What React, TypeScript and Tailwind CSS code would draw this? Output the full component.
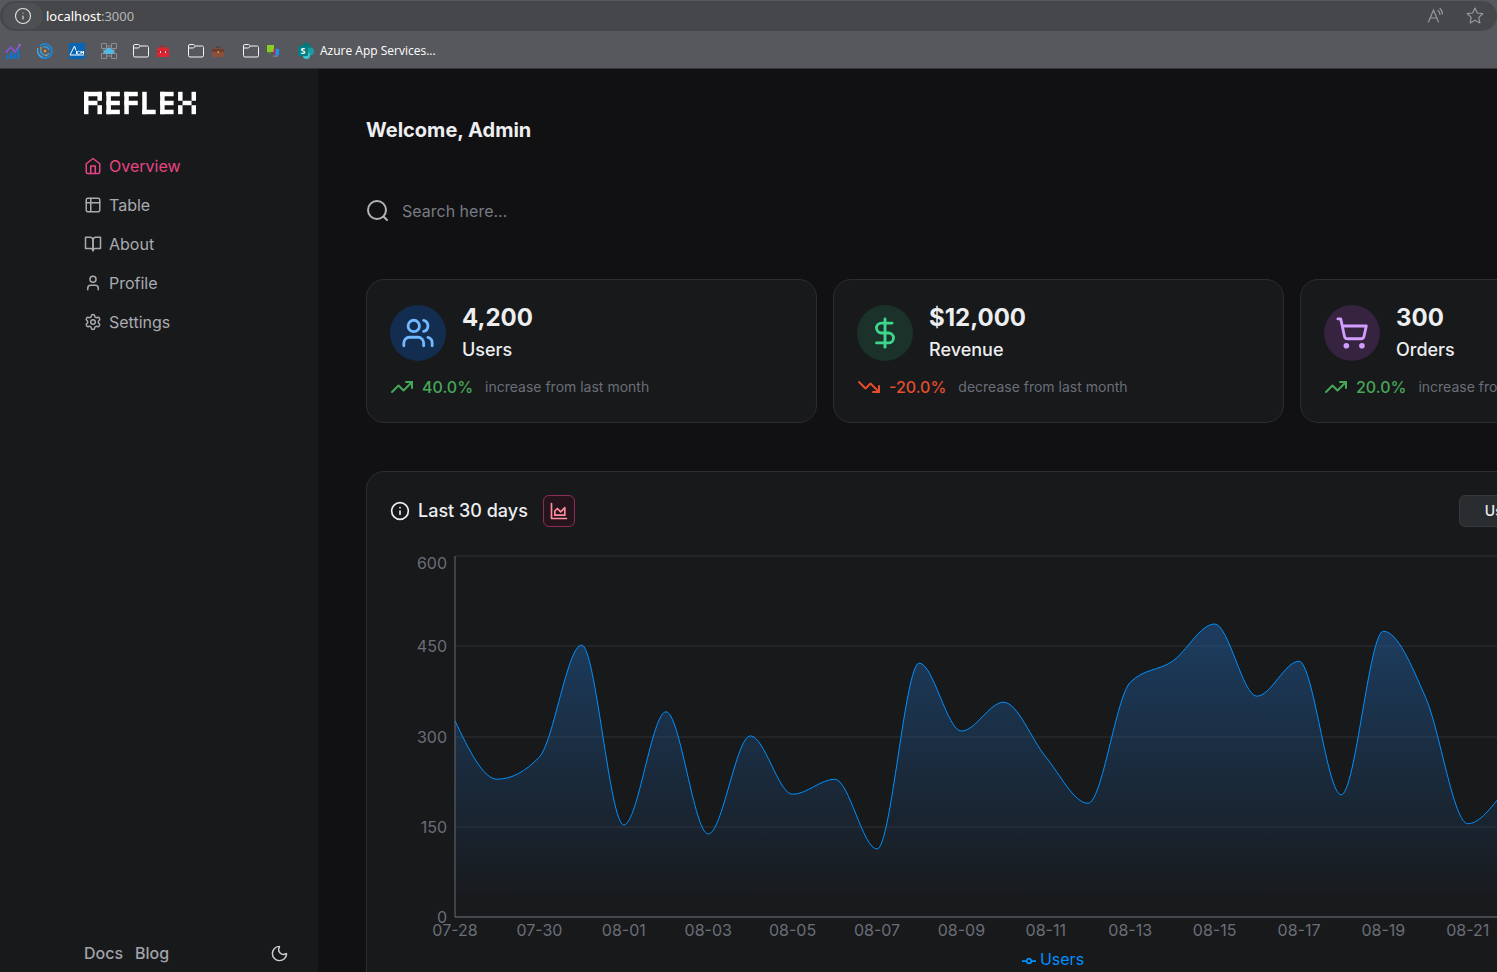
import type { ReactNode } from "react";
import { DollarSign, Info, Moon, Settings, ShoppingCart, TrendingDown, TrendingUp, User, Users } from "lucide-react";

function StrokeIcon({ size, children }: { size: number; children: ReactNode }) {
  return (
    <svg width={size} height={size} viewBox="0 0 24 24" fill="none" stroke="currentColor" strokeWidth="2" strokeLinecap="round" strokeLinejoin="round" aria-hidden="true">
      {children}
    </svg>
  );
}

const HomeIcon = () => (
  <StrokeIcon size={18}>
    <path d="m3 9 9-7 9 7v11a2 2 0 0 1-2 2H5a2 2 0 0 1-2-2z" />
    <path d="M9 22V12h6v10" />
  </StrokeIcon>
);

const TableIcon = () => (
  <StrokeIcon size={18}>
    <rect x="3" y="3" width="18" height="18" rx="2" />
    <path d="M3 9h18M9 3v18" />
  </StrokeIcon>
);

const BookIcon = () => (
  <StrokeIcon size={18}>
    <path d="M2 3h6a4 4 0 0 1 4 4v14a3 3 0 0 0-3-3H2z" />
    <path d="M22 3h-6a4 4 0 0 0-4 4v14a3 3 0 0 1 3-3h7z" />
  </StrokeIcon>
);

const AreaIcon = () => (
  <StrokeIcon size={20}>
    <path d="M3 3v18h18" />
    <path d="M7 12v5h12V8l-5 5-4-4Z" />
  </StrokeIcon>
);

const FolderIcon = () => (
  <svg width="16" height="16" viewBox="0 0 16 16" fill="none" stroke="#f3f3f4" aria-hidden="true">
    <path d="M.5 4V3A1.5 1.5 0 0 1 2 1.500h3.500l2 1.500h6A1.500 1.500 0 0 1 15.500 4.500V12.500a1.500 1.500 0 0 1-1.500 1.500H2a1.500 1.500 0 0 1-1.500-1.500zM.5 5h5l2-2" />
  </svg>
);

const LOGO_BLOCKS: [number, number, number, number][] = [
  [0, 0, 2, 10], [0, 0, 8, 2], [6, 0, 2, 4], [0, 4, 6, 2], [6, 6, 2, 4],
  [10, 0, 2, 10], [10, 0, 6, 2], [10, 4, 6, 2], [10, 8, 6, 2],
  [18, 0, 2, 10], [18, 0, 6, 2], [18, 4, 6, 2],
  [26, 0, 2, 10], [26, 8, 6, 2],
  [34, 0, 2, 10], [34, 0, 6, 2], [34, 4, 6, 2], [34, 8, 6, 2],
  [42, 0, 2, 4], [48, 0, 2, 4], [44, 4, 4, 2], [42, 6, 2, 4], [48, 6, 2, 4],
];

function Logo() {
  return (
    <svg width="112" height="24" viewBox="0 0 56 12" fill="white" role="img" aria-label="Reflex">
      {LOGO_BLOCKS.map(([x, y, w, h], i) => (
        <rect key={i} x={x * 1.12} y={0.4 + y * 1.12} width={w * 1.12} height={h * 1.12} />
      ))}
    </svg>
  );
}

function BrowserBar() {
  return (
    <header className="h-[69px] shrink-0 border-b border-[#37373a] bg-[#57585d] pt-px font-['Open_Sans',sans-serif]">
      <div className="flex h-[30px] items-center rounded-full bg-[#46474b] pr-3 pl-[3px]">
        <button aria-label="View site information" className="flex h-[26px] w-10 items-center justify-center rounded-full bg-[#4e4f53] text-[#e2e2e3]">
          <Info size={18} strokeWidth={1.5} />
        </button>
        <input aria-label="Address" className="sr-only" defaultValue="localhost:3000" />
        <span className="pl-[3px] font-['Noto_Sans',sans-serif] text-[13px] text-[#b4b5b7]">
          <span className="text-white">localhost</span>:3000
        </span>
        <div className="ml-auto flex items-center gap-5 text-[#97989b]">
          <button aria-label="Read aloud">
            <svg width="18" height="18" viewBox="0 0 18 18" fill="none" stroke="currentColor" strokeWidth="1.2" strokeLinecap="round">
              <path d="M1.500 15 6.500 3l5 12M3.300 11h6.400M11 3.500a6 6 0 0 1 2 4M13 1.500a9 9 0 0 1 2.500 5.500" />
            </svg>
          </button>
          <button aria-label="Add to favourites">
            <svg width="20" height="20" viewBox="0 0 20 20" fill="none" stroke="currentColor" strokeWidth="1.200" strokeLinejoin="round">
              <path d="m10 2 2.300 5 5.500.7-4 3.700 1 5.600-4.800-2.700L5.200 17l1-5.600-4-3.700 5.500-.7z" />
            </svg>
          </button>
        </div>
      </div>
      <nav aria-label="Bookmarks" className="flex h-[38px] items-center gap-4 pt-[2px] pl-[5px] text-[12px] text-white">
        <a href="#analytics" aria-label="Analytics">
          <svg width="16" height="16" viewBox="0 0 16 16">
            <path d="M1 12h3v4H1zM5 9h3v7H5zM9 11h2v5H9zM12 6h2.500v10H12z" fill="#1274c4" />
            <path d="m1 9 5-5 4 5 5-7" fill="none" stroke="#8b57d8" strokeWidth="1.500" />
            <circle cx="1.500" cy="9" r="1.300" fill="#7c4ddb" /><circle cx="6" cy="4.500" r="1.300" fill="#7c4ddb" /><circle cx="10" cy="8.500" r="1.300" fill="#7c4ddb" /><circle cx="14.500" cy="2" r="1.300" fill="#9b5fe8" />
          </svg>
        </a>
        <a href="#monitor" aria-label="Monitor">
          <svg width="16" height="16" viewBox="0 0 16 16" fill="none">
            <path d="M3 3a7 7 0 1 1-1.500 8" stroke="#1b83d2" strokeWidth="2" />
            <path d="M1 5a7 7 0 0 0 5 9.500" stroke="#47a6e0" strokeWidth="1.500" />
            <path d="M4 6a4.500 4.500 0 0 0 8 4M6 4a4.500 4.500 0 0 1 6 3" stroke="#35a0dc" strokeWidth="1.500" />
            <circle cx="8" cy="8" r="1.500" fill="#d98f3c" /><circle cx="4" cy="5" r="1" fill="#d98f3c" /><circle cx="9" cy="12.500" r="1" fill="#d98f3c" />
          </svg>
        </a>
        <a href="#law" aria-label="Acumen">
          <svg width="16" height="16" viewBox="0 0 16 16" fill="none">
            <rect width="16" height="16" fill="#0864b4" />
            <path d="M1 12 5.500 3 7 7.500M1 12h14M7.500 8v3M10.500 8.500a1.500 1.500 0 1 0 0 2.500M12 11V8l1 2 1.500-2v3" stroke="white" />
          </svg>
        </a>
        <a href="#cloud" aria-label="Cloud resources">
          <svg width="16" height="16" viewBox="0 0 16 16">
            <path d="M.5.5h5v5h-5zM10.500.5h5v5h-5zM.5 10.500h5v5h-5zM10.500 10.500h5v5h-5z" fill="none" stroke="#8c8d90" />
            <path d="M5.500 3h5M5.500 13h5M3 5.500v5M13 5.500v5" fill="none" stroke="#8c8d90" />
            <path d="M4.500 11a2 2 0 0 1 0-4A3.500 3.500 0 0 1 11 6.500a2.300 2.300 0 0 1 .5 4.500z" fill="#52b8e4" />
          </svg>
        </a>
        <a href="#toolbox" aria-label="Toolbox folder" className="flex items-center gap-2">
          <FolderIcon />
          <svg width="15" height="14" viewBox="0 0 15 14">
            <path d="M3.500 3.500V2h5v1.500" stroke="#a52a2d" fill="none" />
            <path d="M1 3.500h10l1 3V13H0V6.500z" fill="#dc2633" />
            <path d="M0 7.500h12" stroke="#b51f2b" /><path d="M3 7h1v2H3zM8 7h1v2H8z" fill="#ddd" />
          </svg>
        </a>
        <a href="#work" aria-label="Work folder" className="flex items-center gap-2">
          <FolderIcon />
          <svg width="15" height="14" viewBox="0 0 15 14">
            <path d="M4 4.500V3h4v1.500" stroke="#56352b" fill="none" />
            <rect y="4.500" width="12" height="8.500" rx="1" fill="#8a503c" />
            <path d="M0 5h12v3H0z" fill="#6d3d2e" /><path d="M5.500 7h1.500v2H5.500z" fill="#d59a3d" />
          </svg>
        </a>
        <a href="#screens" aria-label="Screens folder" className="flex items-center gap-2">
          <FolderIcon />
          <svg width="15" height="14" viewBox="0 0 15 14">
            <path d="M0 1h7v7H0z" fill="#87cf27" /><path d="M1 8h3v2H1z" fill="#50802a" />
            <path d="M6.500 5h2v5h-2z" fill="#d8175c" /><path d="M8.500 5h3.500v6.500H8.500z" fill="#1695e8" /><path d="M6 11.500h5V13H6z" fill="#7c7788" />
          </svg>
        </a>
        <a href="#azure" className="flex items-center gap-[5px]">
          <svg width="17" height="16" viewBox="0 0 17 16">
            <circle cx="8" cy="5" r="5" fill="#03787c" /><circle cx="12" cy="8.500" r="4" fill="#1a9ba1" /><circle cx="8.500" cy="12.500" r="3.500" fill="#37c6d0" />
            <rect y="3" width="10" height="10" rx="1" fill="#067d82" />
            <text x="5" y="11" textAnchor="middle" fontSize="9" fontWeight="700" fill="white">S</text>
          </svg>
          Azure App Services...
        </a>
      </nav>
    </header>
  );
}

const NAV = [
  { label: "Overview", icon: <HomeIcon />, active: true },
  { label: "Table", icon: <TableIcon /> },
  { label: "About", icon: <BookIcon /> },
  { label: "Profile", icon: <User size={18} /> },
  { label: "Settings", icon: <Settings size={18} /> },
];

function Sidebar() {
  return (
    <aside className="flex w-[318px] shrink-0 flex-col bg-[#18191b] pt-[22px] pr-[29px] pb-[7px] pl-[84px]">
      <Logo />
      <nav aria-label="Main" className="mt-[39px] flex flex-col gap-[15px]">
        {NAV.map((item) => (
          <a key={item.label} href={`#${item.label.toLowerCase()}`} className={item.active ? "flex items-center gap-[7px] text-[#e54583]" : "flex items-center gap-[7px] text-[#a9abb1]"}>
            {item.icon}
            {item.label}
          </a>
        ))}
      </nav>
      <div className="mt-auto flex items-center gap-3 font-medium text-[#a1a3a9]">
        <a href="#docs">Docs</a>
        <a href="#blog">Blog</a>
        <button aria-label="Toggle dark mode" className="ml-auto text-[#cfd0d3]">
          <Moon size={19} strokeWidth={1.8} />
        </button>
      </div>
    </aside>
  );
}

const STATS = [
  { value: "4,200", label: "Users", change: "40.0%", up: true, icon: <Users size={34} />, tint: "bg-[#132d50] text-[#70b8ff]" },
  { value: "$12,000", label: "Revenue", change: "-20.0%", up: false, icon: <DollarSign size={34} />, tint: "bg-[#1a3229] text-[#3dd68c]" },
  { value: "300", label: "Orders", change: "20.0%", up: true, icon: <ShoppingCart size={34} />, tint: "bg-[#352340] text-[#d19dff]" },
];

function StatCard({ stat }: { stat: (typeof STATS)[number] }) {
  return (
    <article className="rounded-[18px] border border-[#2b2d30] bg-[#18191b] px-[23px] pt-[21px] pb-[23px]">
      <div className="flex items-center gap-4">
        <div className={`flex size-14 items-center justify-center rounded-full ${stat.tint}`}>{stat.icon}</div>
        <div>
          <h2 className="text-[24px] leading-[34px] font-bold text-[#edeef0]">{stat.value}</h2>
          <p className="text-[18px] leading-[30px] font-medium text-[#edeef0]">{stat.label}</p>
        </div>
      </div>
      <div className="mt-[10px] flex items-center">
        <div className={stat.up ? "flex items-center gap-2 font-medium text-[#46a758]" : "flex items-center gap-2 font-medium text-[#e54d2e]"}>
          {stat.up ? <TrendingUp size={24} /> : <TrendingDown size={24} />}
          {stat.change}
        </div>
        <span className="ml-3 text-[14px] text-[#696e77]">{stat.up ? "increase" : "decrease"} from last month</span>
      </div>
    </article>
  );
}

const PLOT = { left: 64, top: 13, bottom: 374, right: 1330, step: 42.2 };
const DAILY_USERS = [
  326, 229, 266, 452, 153, 341, 138, 301, 204, 229, 113, 422, 309, 357, 266, 189, 390, 425, 487, 367, 425, 203, 475, 365, 155, 220, 310, 260, 380, 300, 340,
];
const TICK_DATES = ["07-28", "07-30", "08-01", "08-03", "08-05", "08-07", "08-09", "08-11", "08-13", "08-15", "08-17", "08-19", "08-21", "08-23", "08-25"];
const Y_TICKS = [600, 450, 300, 150, 0];

const toY = (value: number) => PLOT.bottom - (value * (PLOT.bottom - PLOT.top)) / 600;

/** Cubic path with monotone tangents through evenly spaced samples. */
function monotonePath(values: number[]) {
  const h = PLOT.step;
  const ys = values.map(toY);
  const slopes = ys.slice(1).map((y, i) => (y - ys[i]) / h);
  const tangents = ys.map((_, i) => {
    if (i === 0 || i === ys.length - 1) return 0;
    const a = slopes[i - 1];
    const b = slopes[i];
    if (a * b <= 0) return 0;
    return Math.sign(a) * 2 * Math.min(Math.abs(a), Math.abs(b), Math.abs(a + b) / 4);
  });
  const n = ys.length - 1;
  tangents[0] = (3 * slopes[0] - tangents[1]) / 2;
  tangents[n] = (3 * slopes[n - 1] - tangents[n - 1]) / 2;
  let d = `M${PLOT.left},${ys[0]}`;
  for (let i = 0; i < n; i++) {
    const x0 = PLOT.left + i * h;
    const x1 = x0 + h;
    d += `C${x0 + h / 3},${ys[i] + (tangents[i] * h) / 3} ${x1 - h / 3},${ys[i + 1] - (tangents[i + 1] * h) / 3} ${x1},${ys[i + 1]}`;
  }
  return d;
}

function UsersChart() {
  const line = monotonePath(DAILY_USERS);
  return (
    <svg width="1334" height="404" viewBox="0 0 1334 404" className="block overflow-visible" role="img" aria-label="Daily users over the last 30 days">
      <defs>
        <linearGradient id="usersFill" x1="0" y1="0" x2="0" y2="1">
          <stop offset="5%" stopColor="#205d9e" stopOpacity="0.5" />
          <stop offset="95%" stopColor="#205d9e" stopOpacity="0.01" />
        </linearGradient>
      </defs>
      {Y_TICKS.map((t) => (
        <line key={t} x1={PLOT.left} x2={PLOT.right} y1={Math.round(toY(t))} y2={Math.round(toY(t))} stroke="#2e3135" />
      ))}
      <path d={`${line}L${PLOT.left + PLOT.step * 30},${PLOT.bottom}L${PLOT.left},${PLOT.bottom}Z`} fill="url(#usersFill)" />
      <path d={line} fill="none" stroke="#0090ff" />
      <path d={`M${PLOT.left} ${PLOT.top}V${PLOT.bottom}H${PLOT.right}`} fill="none" stroke="#666a72" strokeWidth="1" />
      <g fill="#696e77" fontSize="16">
        {Y_TICKS.map((t) => (
          <text key={t} x={PLOT.left - 8} y={Math.max(toY(t), 20) + 6} textAnchor="end">{t}</text>
        ))}
        {TICK_DATES.map((date, i) => (
          <text key={date} x={PLOT.left + PLOT.step * 2 * i} y={PLOT.bottom + 19} textAnchor="middle">{date}</text>
        ))}
      </g>
    </svg>
  );
}

function ChartCard() {
  return (
    <section className="mt-12 rounded-[18px] border border-[#2b2d30] bg-[#18191b] px-[23px] pt-[23px] pb-6">
      <div className="flex h-8 items-center">
        <Info size={20} className="text-[#edeef0]" />
        <h2 className="ml-2 text-[18px] font-medium text-[#edeef0]">Last 30 days</h2>
        <button aria-label="Toggle area chart" className="ml-[15px] flex size-8 items-center justify-center rounded-[6px] border border-[#8a2d5a] bg-[#26141c] text-[#ff8da1]">
          <AreaIcon />
        </button>
        <div className="ml-auto flex w-[268px] rounded-[6px] border border-[#363a3f] bg-[#2a2d30] text-[14px] font-medium text-[#edeef0]">
          <button className="h-[30px] flex-1 text-center">Users</button>
          <button className="h-[30px] flex-1 bg-[#18191b] text-center">Revenue</button>
          <button className="h-[30px] flex-1 bg-[#18191b] text-center">Orders</button>
        </div>
      </div>
      <div className="mt-4 pl-px">
        <UsersChart />
      </div>
      <div className="flex items-center justify-center gap-1 pr-[11px] leading-6 text-[#0090ff]">
        <svg width="14" height="14" viewBox="0 0 32 32" fill="none" stroke="currentColor" strokeWidth="4" aria-hidden="true" className="mt-1">
          <path d="M0 16h10.700a5.300 5.300 0 1 1 10.600 0H32M21.300 16a5.300 5.300 0 1 1-10.600 0" />
        </svg>
        Users
      </div>
    </section>
  );
}

export default function App() {
  return (
    <div className="flex h-screen flex-col overflow-hidden bg-[#111113] font-['Inter',sans-serif] text-[16px] leading-6">
      <BrowserBar />
      <div className="flex min-h-0 flex-1">
        <Sidebar />
        <main className="min-w-0 flex-1 overflow-hidden px-12 pt-[46px]">
          <div className="min-w-[1385px]">
            <h1 className="text-[20px] leading-[30px] font-bold text-[#edeef0]">Welcome, Admin</h1>
            <label className="mt-[54px] flex h-6 items-center gap-3 text-[#b0b4ba]">
              <StrokeIcon size={24}>
                <circle cx="11" cy="11" r="9" />
                <path d="m21 21-3.500-3.500" />
              </StrokeIcon>
              <input type="search" aria-label="Search" placeholder="Search here..." className="w-80 bg-transparent outline-none placeholder:text-[#777b84]" />
            </label>
            <div className="mt-14 grid grid-cols-3 gap-4">
              {STATS.map((stat) => (
                <StatCard key={stat.label} stat={stat} />
              ))}
            </div>
            <ChartCard />
          </div>
        </main>
      </div>
    </div>
  );
}
